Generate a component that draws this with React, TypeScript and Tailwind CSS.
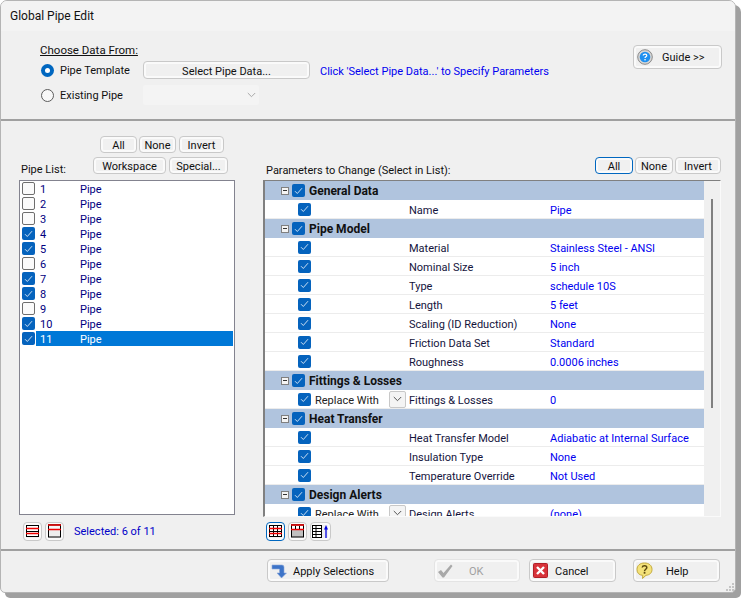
import React from "react";

const TX = "pt-[2px]";

const Check = ({ on = true }: { on?: boolean }) =>
  on ? (
    <span className="flex h-[13px] w-[13px] shrink-0 items-center justify-center rounded-[2px] bg-[#0563bd]">
      <svg width="9" height="8" viewBox="0 0 9 8" fill="none">
        <path d="M1 4.2 L3.3 6.5 L8 1.2" stroke="#c9def2" strokeWidth="1" />
      </svg>
    </span>
  ) : (
    <span className="h-[13px] w-[13px] shrink-0 rounded-[2px] border border-[#6e6e6e] bg-[#fbfbfb]" />
  );

const Btn = ({
  w,
  h = "h-[17px]",
  children,
  focus = false,
  dim = false,
}: {
  w: string;
  h?: string;
  children: React.ReactNode;
  focus?: boolean;
  dim?: boolean;
}) => (
  <div
    className={`${w} ${h} flex shrink-0 items-center justify-center rounded-[4px] border bg-[#f0f0f0] shadow-[inset_0_0_0_2px_#fafafa] ${
      focus ? "border-[#0067c0]" : dim ? "border-[#e4e4e4]" : "border-[#c9c9c9]"
    }`}
  >
    {children}
  </div>
);

const Toggle = () => (
  <span className="flex h-[8px] w-[8px] shrink-0 items-center justify-center border border-[#808080] bg-[#f4f4f4]">
    <span className="h-px w-[4px] bg-[#333]" />
  </span>
);

const Chevron = ({ c = "#555" }: { c?: string }) => (
  <svg width="9" height="6" viewBox="0 0 9 6" fill="none">
    <path d="M0.8 1 L4.5 4.7 L8.2 1" stroke={c} strokeWidth="1" />
  </svg>
);

type Row =
  | { h: string }
  | { label: string; value: string; replace?: boolean };

const rows: Row[] = [
  { h: "General Data" },
  { label: "Name", value: "Pipe" },
  { h: "Pipe Model" },
  { label: "Material", value: "Stainless Steel - ANSI" },
  { label: "Nominal Size", value: "5 inch" },
  { label: "Type", value: "schedule 10S" },
  { label: "Length", value: "5 feet" },
  { label: "Scaling (ID Reduction)", value: "None" },
  { label: "Friction Data Set", value: "Standard" },
  { label: "Roughness", value: "0.0006 inches" },
  { h: "Fittings & Losses" },
  { label: "Fittings & Losses", value: "0", replace: true },
  { h: "Heat Transfer" },
  { label: "Heat Transfer Model", value: "Adiabatic at Internal Surface" },
  { label: "Insulation Type", value: "None" },
  { label: "Temperature Override", value: "Not Used" },
  { h: "Design Alerts" },
  { label: "Design Alerts", value: "(none)", replace: true },
];

const pipes = [
  [1, false],
  [2, false],
  [3, false],
  [4, true],
  [5, true],
  [6, false],
  [7, true],
  [8, true],
  [9, false],
  [10, true],
  [11, true],
] as const;

const GridIcon = ({ variant }: { variant: "lines" | "top" | "grid" | "topSplit" }) => (
  <svg width="15" height="15" viewBox="0 0 15 15" fill="none">
    {variant === "top" || variant === "topSplit" ? (
      <>
        <rect x="1.5" y="1" width="12" height="12" fill={variant === "topSplit" ? "#c0c0c0" : "#eeeeee"} stroke="#000" />
        <rect x="1.5" y="1" width="12" height="4.5" fill={variant === "topSplit" ? "#ffffff" : "#f6f6f6"} stroke="#000" />
        <path d="M1 1 H14 M1 5.5 H14" stroke="#f00000" strokeWidth="1.4" />
        {variant === "topSplit" && <path d="M5.5 2 V5 M9.5 2 V5" stroke="#000" />}
      </>
    ) : (
      <>
        <rect x="1.5" y="1.5" width="12" height="11" fill="#fff" stroke="#000" />
        <path d="M1.5 7.5 H13.5" stroke="#000" />
        {variant === "grid" && <path d="M5.5 2 V12 M9.5 2 V12" stroke="#000" />}
        <path d="M1 4.5 H14 M1 9.5 H14" stroke="#f00000" strokeWidth="1.5" />
      </>
    )}
  </svg>
);

const TallIcon = () => (
  <svg width="17" height="15" viewBox="0 0 17 15" fill="none">
    <rect x="0.5" y="1.5" width="9" height="12" fill="#fff" stroke="#000" />
    <path d="M0.5 4.5 H9.5 M0.5 7.5 H9.5 M0.5 10.5 H9.5 M4 2 V13" stroke="#000" />
    <path d="M14 14 V3" stroke="#0000e0" strokeWidth="1.3" />
    <path d="M12 5.5 L14 1 L16 5.5 Z" fill="#0000e0" />
  </svg>
);

export default function App() {
  return (
    <div
      className="h-[598px] w-[741px] overflow-hidden bg-white text-[11px] leading-[15px] text-[#111]"
      style={{ fontFamily: 'Roboto, "Liberation Sans", sans-serif' }}
    >
      <div className="relative flex h-[593px] w-[736px] flex-col overflow-hidden rounded-t-[7px] rounded-b-[5px] border border-[#b4b4b4] bg-[#f0f0f0] shadow-[5px_5px_0_#a0a0a0]">
        <div className="flex h-[30px] shrink-0 items-center bg-[#f3f3f3] pl-[9px] text-[12px]">Global Pipe Edit</div>

        {/* top section */}
        <div className="flex h-[88px] shrink-0 justify-between pl-[39px] pr-[13px]">
          <div className="flex flex-col pt-[12px]">
            <div className="text-[11.5px] underline">Choose Data From:</div>
            <div className="mt-[3px] flex h-[18px] items-center">
              <span className="ml-px flex h-[13px] w-[13px] items-center justify-center rounded-full bg-[#0067c0]">
                <span className="h-[5px] w-[5px] rounded-full bg-white" />
              </span>
              <span className="ml-[6px] w-[83px]">Pipe Template</span>
              <Btn w="w-[167px]" h="h-[18px]"><span className={TX}>Select Pipe Data...</span></Btn>
              <span className={`ml-[10px] text-[#0000f0] ${TX}`}>Click 'Select Pipe Data...' to Specify Parameters</span>
            </div>
            <div className="mt-[6px] flex h-[20px] items-center">
              <span className="ml-px h-[13px] w-[13px] rounded-full border border-[#5c5c5c] bg-[#f8f8f8]" />
              <span className="ml-[6px] w-[83px]">Existing Pipe</span>
              <div className="flex h-[20px] w-[116px] items-center justify-end rounded-[2px] bg-[#f4f4f4] pr-[3px]">
                <Chevron c="#a8a8a8" />
              </div>
            </div>
          </div>
          <div className="pt-[14px]">
            <Btn w="w-[89px]" h="h-[24px]">
              <span className="flex w-full items-center pl-[3px]">
                <svg width="16" height="16" viewBox="0 0 16 16">
                  <circle cx="8" cy="8" r="7.3" fill="#d6d6d6" stroke="#8a8a8a" />
                  <circle cx="8" cy="8" r="5.3" fill="#1e90f0" />
                  <path d="M6.2 6.5 C6.2 4.6 9.8 4.6 9.8 6.5 C9.8 7.8 8 7.7 8 9" fill="none" stroke="#fff" strokeWidth="1.2" />
                  <rect x="7.4" y="10" width="1.3" height="1.4" fill="#fff" />
                </svg>
                <span className="ml-[9px]">Guide &gt;&gt;</span>
              </span>
            </Btn>
          </div>
        </div>
        <div className="h-[2px] shrink-0 bg-[#a0a0a0]" />

        {/* middle section */}
        <div className="flex h-[428px] shrink-0">
          <div className="w-[262px] shrink-0 pl-[18px] pt-[15px]">
            <div className="ml-[81px] flex">
              <Btn w="w-[37px]"><span className={TX}>All</span></Btn>
              <div className="w-[2px]" />
              <Btn w="w-[37px]"><span className={TX}>None</span></Btn>
              <div className="w-[3px]" />
              <Btn w="w-[45px]"><span className={TX}>Invert</span></Btn>
            </div>
            <div className="mt-[4px] flex h-[23px]">
              <span className="ml-[2px] w-[72px] self-end pb-[3px]">Pipe List:</span>
              <Btn w="w-[73px]"><span className={TX}>Workspace</span></Btn>
              <div className="w-[3px]" />
              <Btn w="w-[59px]"><span className={TX}>Special...</span></Btn>
            </div>
            <div className="h-[335px] w-[216px] border border-[#83838f] bg-white text-[#000080]">
              {pipes.map(([n, on], i) => (
                <div key={n} className="flex h-[15px] items-center pl-[2px]">
                  <Check on={on} />
                  <div className={`ml-px flex h-[15px] w-[197px] items-center pl-[4px] ${i === 10 ? "bg-[#0078d7] text-white" : ""}`}>
                    <span className={`w-[40px] ${TX}`}>{n}</span>
                    <span className={TX}>Pipe</span>
                  </div>
                </div>
              ))}
            </div>
            <div className="ml-[4px] mt-[7px] flex items-center">
              <Btn w="w-[19px]" h="h-[19px]"><GridIcon variant="lines" /></Btn>
              <div className="w-[3px]" />
              <Btn w="w-[19px]" h="h-[19px]"><GridIcon variant="top" /></Btn>
              <span className="ml-[10px] text-[#0000c8]">Selected: 6 of 11</span>
            </div>
          </div>

          <div className="w-[458px] shrink-0 pt-[36px]">
            <div className="flex h-[23px] pl-[1px]">
              <span className="ml-[2px] flex-1 self-end pb-[2px]">Parameters to Change (Select in List):</span>
              <Btn w="w-[38px]" focus><span className={TX}>All</span></Btn>
              <div className="w-[2px]" />
              <Btn w="w-[38px]"><span className={TX}>None</span></Btn>
              <div className="w-[2px]" />
              <Btn w="w-[46px]"><span className={TX}>Invert</span></Btn>
            </div>
            <div className="flex h-[337px] overflow-hidden border-b border-l-2 border-r border-t border-b-[#fafafa] border-l-[#808080] border-r-[#fafafa] border-t-[#808080]">
              <div className="w-[439px] shrink-0 bg-white">
                {rows.map((r, i) =>
                  "h" in r ? (
                    <div key={i} className="flex h-[19px] items-center bg-[#b0c4de] pl-[16px]">
                      <Toggle />
                      <span className="ml-[3px]"><Check /></span>
                      <span className={`ml-[4px] text-[12px] font-bold ${TX}`}>{r.h}</span>
                    </div>
                  ) : (
                    <div key={i} className="flex h-[19px] items-center border-b border-[#ececec] pl-[33px] text-[#14143c]">
                      <Check />
                      {r.replace ? (
                        <>
                          <span className={`ml-[4px] w-[74px] shrink-0 text-[#222] ${TX}`}>Replace With</span>
                          <span className="flex h-[17px] w-[17px] shrink-0 items-center justify-center rounded-[2px] border border-[#c8c8c8] bg-[#f4f4f4]">
                            <Chevron />
                          </span>
                          <span className={`ml-[3px] w-[141px] shrink-0 ${TX}`}>{r.label}</span>
                        </>
                      ) : (
                        <span className={`ml-[98px] w-[141px] shrink-0 ${TX}`}>{r.label}</span>
                      )}
                      <span className={`whitespace-nowrap text-[#0000f0] ${TX}`}>{r.value}</span>
                    </div>
                  )
                )}
              </div>
              <div className="w-[16px] shrink-0 pl-[7px] pt-[18px]">
                <div className="h-[209px] w-[2px] bg-[#808080]" />
              </div>
            </div>
            <div className="ml-[3px] mt-[5px] flex">
              <Btn w="w-[19px]" h="h-[19px]" focus><GridIcon variant="grid" /></Btn>
              <div className="w-[3px]" />
              <Btn w="w-[19px]" h="h-[19px]"><GridIcon variant="topSplit" /></Btn>
              <div className="w-[3px]" />
              <Btn w="w-[21px]" h="h-[19px]"><TallIcon /></Btn>
            </div>
          </div>
        </div>
        <div className="h-[2px] shrink-0 bg-[#a0a0a0]" />

        {/* bottom section */}
        <div className="flex flex-1 pl-[266px] pt-[8px]">
          <Btn w="w-[122px]" h="h-[23px]">
            <span className="flex w-full items-center pl-[3px]">
              <svg width="16" height="16" viewBox="0 0 16 16">
                <path d="M1 2 H11 Q13 2 13 4 V10 H15.5 L10.5 15 L6 10 H8.5 V6 H1 Z" fill="#3d74c8" stroke="#8fa9d8" strokeWidth="0.6" />
              </svg>
              <span className={`ml-[6px] ${TX}`}>Apply Selections</span>
            </span>
          </Btn>
          <div className="ml-[45px]">
            <Btn w="w-[86px]" h="h-[23px]" dim>
              <span className="flex w-full items-center pl-[2px]">
                <svg width="17" height="16" viewBox="0 0 17 16">
                  <path d="M1 9 L4 7 L6.5 10 L14 1.5 L15.5 3 L7 14.5 L5.5 14.5 Z" fill="#a8a8a8" />
                </svg>
                <span className={`ml-[15px] text-[#a0a0a0] ${TX}`}>OK</span>
              </span>
            </Btn>
          </div>
          <div className="ml-[9px]">
            <Btn w="w-[87px]" h="h-[23px]">
              <span className="flex w-full items-center pl-[3px]">
                <svg width="15" height="15" viewBox="0 0 15 15">
                  <rect x="0.5" y="0.5" width="14" height="14" rx="1" fill="#d8333a" stroke="#b02028" />
                  <path d="M4 4 L11 11 M11 4 L4 11" stroke="#fff" strokeWidth="2.4" />
                </svg>
                <span className={`ml-[7px] ${TX}`}>Cancel</span>
              </span>
            </Btn>
          </div>
          <div className="ml-[17px]">
            <Btn w="w-[87px]" h="h-[23px]">
              <span className="flex w-full items-center pl-[2px]">
                <svg width="17" height="18" viewBox="0 0 17 18">
                  <path d="M8.5 1 C13 1 16 3.5 16 7.5 C16 11 13.5 13 10 13.3 L6.5 16.5 L6.8 13.4 C3 13 1 11 1 7.5 C1 3.5 4 1 8.5 1 Z" fill="#f4e27a" stroke="#c2a93c" />
                  <path d="M6.2 5.5 C6.5 3.2 10.8 3.2 10.8 5.6 C10.8 7.3 8.5 7.2 8.5 9.2" fill="none" stroke="#5c4a10" strokeWidth="1.5" />
                  <rect x="7.7" y="10" width="1.7" height="1.7" fill="#5c4a10" />
                </svg>
                <span className={`ml-[13px] ${TX}`}>Help</span>
              </span>
            </Btn>
          </div>
        </div>
        <svg className="absolute bottom-0 right-0" width="10" height="10" viewBox="0 0 10 10" fill="#c4c4c4">
          <rect x="7" y="1" width="2" height="2" />
          <rect x="4" y="4" width="2" height="2" />
          <rect x="7" y="4" width="2" height="2" />
          <rect x="1" y="7" width="2" height="2" />
          <rect x="4" y="7" width="2" height="2" />
          <rect x="7" y="7" width="2" height="2" />
        </svg>
      </div>
    </div>
  );
}
